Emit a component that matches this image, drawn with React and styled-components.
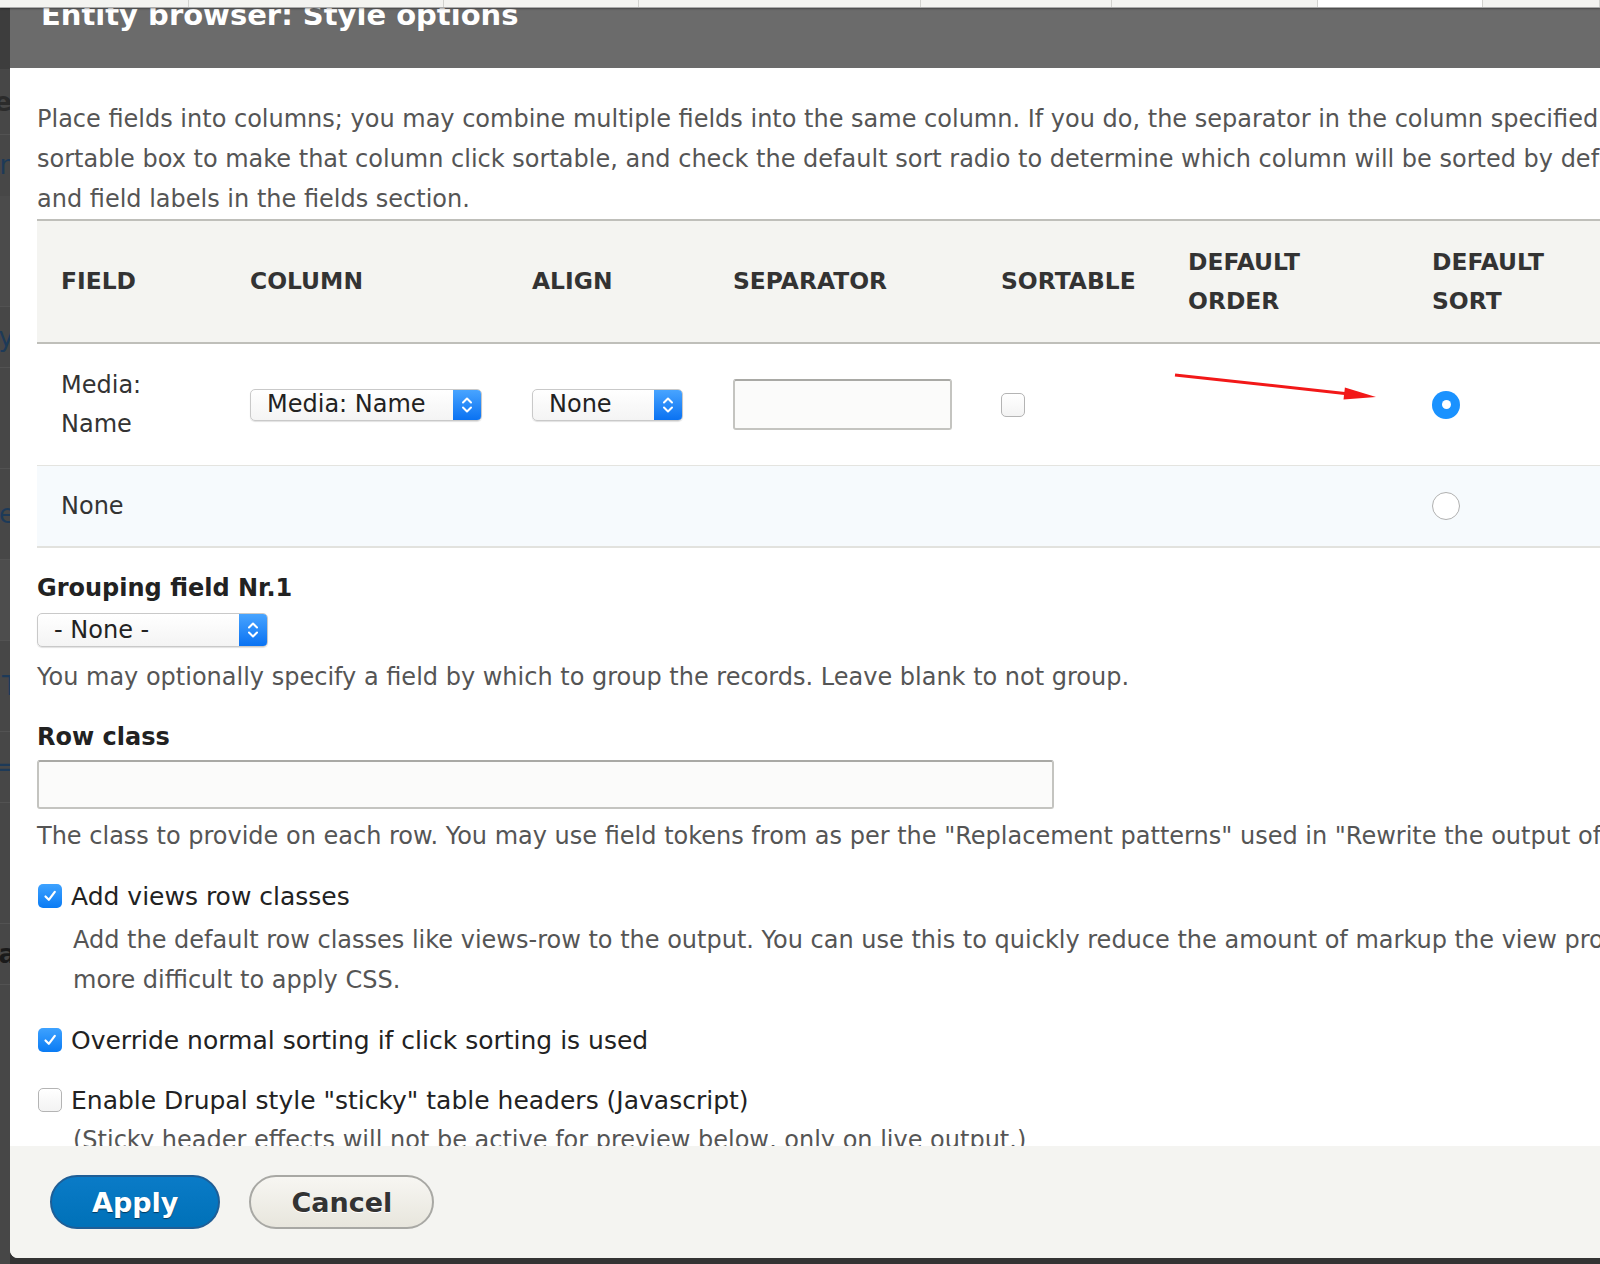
import React from "react";
import styled, { createGlobalStyle } from "styled-components";

const GlobalStyle = createGlobalStyle`
  html, body {
    margin: 0;
    padding: 0;
  }
  body {
    font-family: "DejaVu Sans", "Liberation Sans", sans-serif;
    color: #333;
  }
`;

const Page = styled.div`
  width: 1600px;
  height: 1264px;
  overflow: hidden;
  display: flex;
  flex-direction: column;
  background: #333;
`;

const TopStrip = styled.div`
  height: 7px;
  flex: none;
  display: flex;
  background: #f3f3f0;
  border-bottom: 1px solid #aaa;
  box-shadow: 0 1px 2px rgba(0, 0, 0, 0.35);
  position: relative;
  z-index: 2;
`;

const StripCell = styled.div`
  width: ${(p) => p.w}px;
  flex: none;
  box-sizing: border-box;
  background: ${(p) => (p.white ? "#fff" : "#f3f3f0")};
  border-right: 1px solid #d2d2ce;
`;

const Main = styled.div`
  flex: 1;
  display: flex;
  min-height: 0;
`;

const LeftStrip = styled.div`
  width: 10px;
  flex: none;
  display: flex;
  flex-direction: column;
  overflow: hidden;
  background: #474747;
`;

const BackRow = styled.div`
  height: ${(p) => p.h}px;
  flex: none;
  display: flex;
  align-items: center;
  justify-content: flex-end;
  background: ${(p) => p.bg || "#474747"};
  border-bottom: 1px solid ${(p) => (p.line ? "#525252" : "transparent")};
  overflow: hidden;
`;

const BackGlyph = styled.span`
  font-size: 26px;
  font-weight: ${(p) => (p.bold ? 700 : 400)};
  color: ${(p) => p.c || "#1d3a58"};
  margin-right: ${(p) => p.shift || 0}px;
  line-height: 1;
`;

const Dialog = styled.div`
  width: 1700px;
  flex: none;
  height: 1250px;
  display: flex;
  flex-direction: column;
  background: #fff;
  border-bottom-left-radius: 8px;
  overflow: hidden;
`;

const Header = styled.div`
  height: 60px;
  flex: none;
  background: #6b6b6b;
  padding: 0 31px;
  overflow: hidden;
`;

const Title = styled.h1`
  margin: -7px 0 0 0;
  font-size: 29px;
  line-height: 29px;
  font-weight: 700;
  color: #fff;
  white-space: nowrap;
`;

const Content = styled.div`
  flex: 1;
  min-height: 0;
  overflow: hidden;
  padding: 31px 0 0 27px;
`;

const Description = styled.div`
  font-size: 24px;
  line-height: 40px;
  color: #555;
  white-space: nowrap;
  padding-left: ${(p) => p.indent || 0}px;
  margin-top: ${(p) => p.mt || 0}px;
`;

const Table = styled.div`
  position: relative;
  border-top: 2px solid #bfbfba;
  border-bottom: 2px solid #e2e2de;
`;

const Row = styled.div`
  display: grid;
  grid-template-columns: 189px 282px 201px 268px 187px 244px 1fr;
  height: ${(p) => p.h}px;
  background: ${(p) => p.bg || "#fff"};
  border-bottom: ${(p) => p.border || "none"};
`;

const HeadCell = styled.div`
  display: flex;
  align-items: center;
  padding: 0 24px;
  font-size: 23.4px;
  line-height: 39px;
  font-weight: 700;
  color: #333;
  text-transform: uppercase;
`;

const Cell = styled.div`
  display: flex;
  align-items: center;
  padding: 0 24px;
  font-size: 24px;
  line-height: 39px;
  color: #333;
`;

const SelectBox = styled.div`
  width: ${(p) => p.w}px;
  height: ${(p) => p.h || 32}px;
  box-sizing: border-box;
  display: flex;
  border: 1px solid #c9c9c9;
  border-radius: 5px;
  background: linear-gradient(#ffffff, #f4f4f4);
  box-shadow: 0 1px 1px rgba(0, 0, 0, 0.12);
  overflow: hidden;
`;

const SelectText = styled.div`
  flex: 1;
  display: flex;
  align-items: center;
  padding-left: ${(p) => p.pl || 16}px;
  font-size: 24px;
  color: #222;
  white-space: nowrap;
`;

const SelectArrow = styled.div`
  width: 28px;
  flex: none;
  display: flex;
  align-items: center;
  justify-content: center;
  background: linear-gradient(#48a4ff, #0a72f2);
`;

const TextInput = styled.div`
  width: ${(p) => p.w}px;
  height: ${(p) => p.h}px;
  box-sizing: border-box;
  border: 2px solid #c4c4c0;
  border-top-color: #a9a9a5;
  border-radius: 3px;
  background: #fbfbfa;
  margin-top: ${(p) => p.mt || 0}px;
`;

const Box = styled.div`
  width: 24px;
  height: 24px;
  flex: none;
  box-sizing: border-box;
  border-radius: 5px;
  display: flex;
  align-items: center;
  justify-content: center;
  border: ${(p) => (p.checked ? "none" : "1px solid #b4b4b4")};
  background: ${(p) =>
    p.checked ? "linear-gradient(#3ea2ff, #0a7bf4)" : "linear-gradient(#fff, #f3f3f3)"};
`;

const Radio = styled.div`
  width: 28px;
  height: 28px;
  box-sizing: border-box;
  border-radius: 50%;
  display: flex;
  align-items: center;
  justify-content: center;
  border: ${(p) => (p.checked ? "none" : "1px solid #b0b0b0")};
  background: ${(p) => (p.checked ? "#1a92ff" : "#fff")};
  &::after {
    content: "";
    display: ${(p) => (p.checked ? "block" : "none")};
    width: 9px;
    height: 9px;
    border-radius: 50%;
    background: #fff;
  }
`;

const Arrow = styled.svg`
  position: absolute;
  left: 1130px;
  top: 145px;
  overflow: visible;
`;

const Label = styled.div`
  font-size: 24px;
  line-height: 40px;
  font-weight: 700;
  color: #222;
  margin-top: ${(p) => p.mt || 0}px;
`;

const FieldGap = styled.div`
  height: ${(p) => p.h}px;
`;

const CheckRow = styled.div`
  display: flex;
  align-items: center;
  gap: 9px;
  height: 40px;
  padding-left: 1px;
  margin-top: ${(p) => p.mt || 0}px;
  font-size: 25px;
  color: #222;
  white-space: nowrap;
`;

const Footer = styled.div`
  height: 112px;
  flex: none;
  box-sizing: border-box;
  background: #f4f4f1;
  display: flex;
  align-items: flex-start;
  gap: 29px;
  padding: 29px 0 0 40px;
`;

const Button = styled.div`
  height: 54px;
  box-sizing: border-box;
  padding: 0 ${(p) => (p.primary ? 40 : 40)}px;
  border-radius: 27px;
  display: flex;
  align-items: center;
  font-size: 27px;
  font-weight: 700;
  color: ${(p) => (p.primary ? "#fff" : "#333")};
  text-shadow: ${(p) =>
    p.primary ? "0 1px 1px rgba(0,0,0,0.5)" : "0 1px 0 #fff"};
  background: ${(p) =>
    p.primary
      ? "linear-gradient(#0a7bc7, #0071b8)"
      : "linear-gradient(#f7f6f2, #e8e6dd)"};
  border: 2px solid ${(p) => (p.primary ? "#1f5e96" : "#a8a8a4")};
`;

const Chevrons = () => (
  <svg width="12" height="20" viewBox="0 0 12 20">
    <path
      d="M2 7.5 L6 3.5 L10 7.5 M2 12.5 L6 16.5 L10 12.5"
      fill="none"
      stroke="#fff"
      strokeWidth="2"
      strokeLinecap="round"
      strokeLinejoin="round"
    />
  </svg>
);

const Select = ({ w, h, pl, children }) => (
  <SelectBox w={w} h={h}>
    <SelectText pl={pl}>{children}</SelectText>
    <SelectArrow>
      <Chevrons />
    </SelectArrow>
  </SelectBox>
);

const Check = ({ checked }) => (
  <Box checked={checked}>
    {checked && (
      <svg width="16" height="16" viewBox="0 0 16 16">
        <path
          d="M3.5 8.5 L6.8 11.8 L12.8 3.8"
          fill="none"
          stroke="#fff"
          strokeWidth="2.2"
          strokeLinecap="round"
          strokeLinejoin="round"
        />
      </svg>
    )}
  </Box>
);

const strip = [
  { w: 189 },
  { w: 255 },
  { w: 195 },
  { w: 282 },
  { w: 191 },
  { w: 206 },
  { w: 165, white: true },
  { w: 117 },
];

export default function App() {
  return (
    <Page>
      <GlobalStyle />
      <TopStrip>
        {strip.map((s, i) => (
          <StripCell key={i} w={s.w} white={s.white} />
        ))}
      </TopStrip>
      <Main>
        <LeftStrip>
          <BackRow h={60} bg="#3d3d3d" />
          <BackRow h={65} line>
            <BackGlyph c="#2b2b2b" shift={-2} bold>
              e
            </BackGlyph>
          </BackRow>
          <BackRow h={60}>
            <BackGlyph shift={-6}>n</BackGlyph>
          </BackRow>
          <BackRow h={110} bg="#4b4b4b" line />
          <BackRow h={60} line>
            <BackGlyph shift={-4}>y</BackGlyph>
          </BackRow>
          <BackRow h={100} line />
          <BackRow h={90} line>
            <BackGlyph shift={-5}>e</BackGlyph>
          </BackRow>
          <BackRow h={80} bg="#4d4d4d" line />
          <BackRow h={90} line>
            <BackGlyph shift={-8}>T</BackGlyph>
          </BackRow>
          <BackRow h={70} line>
            <BackGlyph shift={-6}>=</BackGlyph>
          </BackRow>
          <BackRow h={120} line />
          <BackRow h={60} line>
            <BackGlyph c="#1a1a1a" shift={-6} bold>
              a
            </BackGlyph>
          </BackRow>
          <BackRow h={300} />
        </LeftStrip>
        <Dialog>
          <Header>
            <Title>Entity browser: Style options</Title>
          </Header>
          <Content>
            <Description>
              Place fields into columns; you may combine multiple fields into the same column. If you do, the separator in the column specified will be used to separate the fields. Check the
              <br />
              sortable box to make that column click sortable, and check the default sort radio to determine which column will be sorted by default, if any. You may control column order
              <br />
              and field labels in the fields section.
            </Description>
            <Table>
              <Row h={121} bg="#f4f4f1" border="2px solid #bfbfba">
                <HeadCell>Field</HeadCell>
                <HeadCell>Column</HeadCell>
                <HeadCell>Align</HeadCell>
                <HeadCell>Separator</HeadCell>
                <HeadCell>Sortable</HeadCell>
                <HeadCell>
                  Default
                  <br />
                  Order
                </HeadCell>
                <HeadCell>
                  Default
                  <br />
                  Sort
                </HeadCell>
              </Row>
              <Row h={121} border="1px solid #e4e4e0">
                <Cell>
                  Media:
                  <br />
                  Name
                </Cell>
                <Cell>
                  <Select w={232} pl={16}>
                    Media: Name
                  </Select>
                </Cell>
                <Cell>
                  <Select w={151} pl={16}>
                    None
                  </Select>
                </Cell>
                <Cell>
                  <TextInput w={219} h={51} />
                </Cell>
                <Cell>
                  <Check />
                </Cell>
                <Cell />
                <Cell>
                  <Radio checked />
                </Cell>
              </Row>
              <Row h={80} bg="#f6fafd">
                <Cell>None</Cell>
                <Cell />
                <Cell />
                <Cell />
                <Cell />
                <Cell />
                <Cell>
                  <Radio />
                </Cell>
              </Row>
              <Arrow width="220" height="40" viewBox="0 0 220 40">
                <line x1="8" y1="9" x2="180" y2="27.7" stroke="#f21818" strokeWidth="3" />
                <polygon points="209,31 177.9,21.5 176.5,33.5" fill="#f21818" />
              </Arrow>
            </Table>

            <Label mt={20}>Grouping field Nr.1</Label>
            <FieldGap h={5} />
            <Select w={231} h={34} pl={16}>
              - None -
            </Select>
            <Description mt={10}>
              You may optionally specify a field by which to group the records. Leave blank to not group.
            </Description>

            <Label mt={20}>Row class</Label>
            <TextInput w={1017} h={49} mt={3} />
            <Description mt={7}>
              The class to provide on each row. You may use field tokens from as per the "Replacement patterns" used in "Rewrite the output of this field" for all fields.
            </Description>

            <CheckRow mt={20}>
              <Check checked />
              Add views row classes
            </CheckRow>
            <Description indent={36} mt={4}>
              Add the default row classes like views-row to the output. You can use this to quickly reduce the amount of markup the view provides by default, at the cost of making it
              <br />
              more difficult to apply CSS.
            </Description>

            <CheckRow mt={20}>
              <Check checked />
              Override normal sorting if click sorting is used
            </CheckRow>

            <CheckRow mt={20}>
              <Check />
              Enable Drupal style "sticky" table headers (Javascript)
            </CheckRow>
            <Description indent={36}>
              (Sticky header effects will not be active for preview below, only on live output.)
            </Description>
          </Content>
          <Footer>
            <Button primary>Apply</Button>
            <Button>Cancel</Button>
          </Footer>
        </Dialog>
      </Main>
    </Page>
  );
}
